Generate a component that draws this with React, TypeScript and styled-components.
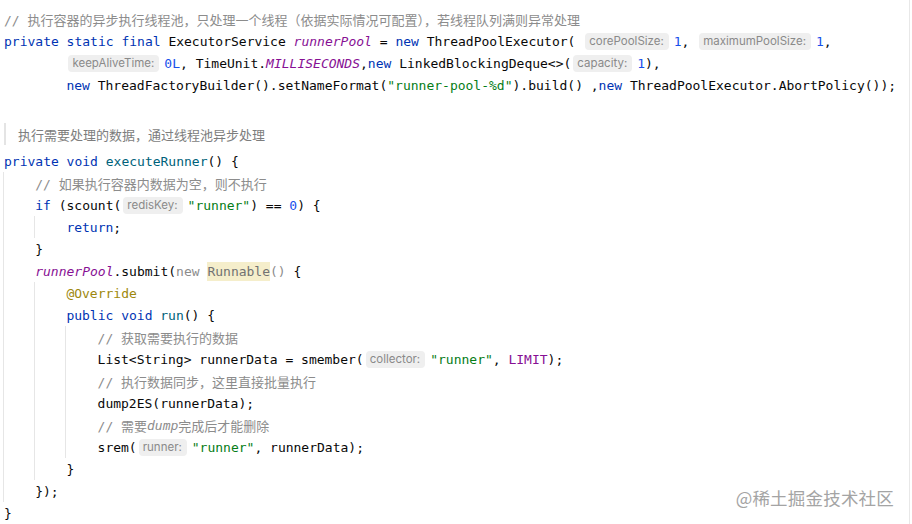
import React from "react";
import styled, { createGlobalStyle, css } from "styled-components";

const Global = createGlobalStyle`
  html, body { margin: 0; padding: 0; background: #ffffff; }
  #root { width: 912px; height: 524px; }
`;

const Editor = styled.div`
  position: relative;
  box-sizing: border-box;
  width: 910px;
  height: 524px;
  overflow: hidden;
  padding-top: 8px;
  border-right: 1px solid #e8e8e8;
  background: #ffffff;
  font-family: "DejaVu Sans Mono", "Noto Sans CJK SC", monospace;
  font-size: 13px;
  color: #080808;
`;

const Line = styled.div`
  display: flex;
  align-items: center;
  height: 22px;
  padding-left: 4px;
  white-space: pre;
`;

const Guide = styled.span<{ $show: boolean }>`
  box-sizing: border-box;
  align-self: stretch;
  flex: none;
  width: 32.2px;
  margin-left: -1px;
  border-left: 1px solid ${(p) => (p.$show ? "#e6e6e6" : "transparent")};
`;

type Kind = "plain" | "kw" | "field" | "num" | "str" | "cmt" | "cmtI" | "fn" | "ann" | "dim" | "runnable" | "const";

const kindStyles: Record<Kind, ReturnType<typeof css>> = {
  plain: css`color: #080808;`,
  kw: css`color: #0033b3;`,
  field: css`color: #871094; font-style: italic;`,
  num: css`color: #1750eb;`,
  str: css`color: #067d17;`,
  cmt: css`color: #8c8c8c;`,
  cmtI: css`color: #8c8c8c; font-style: italic;`,
  fn: css`color: #00627a;`,
  ann: css`color: #9e880d;`,
  dim: css`color: #8c8c8c;`,
  runnable: css`
    color: #727272;
    background: #f5eecb;
    padding: 2px 0;
  `,
  const: css`color: #871094;`,
};

const Token = styled.span<{ $kind: Kind }>`
  ${(p) => kindStyles[p.$kind]}
`;

const Hint = styled.span`
  display: inline-flex;
  align-items: center;
  height: 17px;
  padding: 0 5px 0 4px;
  margin: 0 5px 0 2px;
  border-radius: 4px;
  background: #efefef;
  color: #8a8a8a;
  font-family: Inter, "Noto Sans", sans-serif;
  font-size: 11.5px;
`;

const DocBlock = styled.div`
  display: flex;
  align-items: center;
  height: 32px;
  padding-left: 4px;
`;

const DocText = styled.div`
  display: flex;
  align-items: center;
  height: 22px;
  padding-left: 12px;
  border-left: 2px solid #e4e4e4;
  font-family: "Noto Sans CJK SC", "Noto Sans", sans-serif;
  font-size: 13px;
  color: #7d7d7d;
`;

const Watermark = styled.div`
  position: absolute;
  right: 15px;
  bottom: 14px;
  font-family: "Noto Sans CJK SC", sans-serif;
  font-size: 17.5px;
  color: #a4a4a4;
  letter-spacing: 0.2px;
`;

type Part = [Kind | "hint", string];
type CodeLine = { indent: number; guides: number; parts: Part[] } | { blank: true } | { doc: string };

const lines: CodeLine[] = [
  { indent: 0, guides: 0, parts: [["cmt", "// 执行容器的异步执行线程池，只处理一个线程（依据实际情况可配置），若线程队列满则异常处理"]] },
  {
    indent: 0,
    guides: 0,
    parts: [
      ["kw", "private static final "],
      ["plain", "ExecutorService "],
      ["field", "runnerPool"],
      ["plain", " = "],
      ["kw", "new "],
      ["plain", "ThreadPoolExecutor( "],
      ["hint", "corePoolSize:"],
      ["num", "1"],
      ["plain", ", "],
      ["hint", "maximumPoolSize:"],
      ["num", "1"],
      ["plain", ","],
    ],
  },
  {
    indent: 2,
    guides: 0,
    parts: [
      ["hint", "keepAliveTime:"],
      ["num", "0L"],
      ["plain", ", TimeUnit."],
      ["field", "MILLISECONDS"],
      ["plain", ","],
      ["kw", "new "],
      ["plain", "LinkedBlockingDeque<>("],
      ["hint", "capacity:"],
      ["num", "1"],
      ["plain", "),"],
    ],
  },
  {
    indent: 2,
    guides: 0,
    parts: [
      ["kw", "new "],
      ["plain", "ThreadFactoryBuilder().setNameFormat("],
      ["str", "\"runner-pool-%d\""],
      ["plain", ").build() ,"],
      ["kw", "new "],
      ["plain", "ThreadPoolExecutor.AbortPolicy());"],
    ],
  },
  { blank: true },
  { doc: "执行需要处理的数据，通过线程池异步处理" },
  { indent: 0, guides: 0, parts: [["kw", "private void "], ["fn", "executeRunner"], ["plain", "() {"]] },
  { indent: 1, guides: 1, parts: [["cmt", "// 如果执行容器内数据为空，则不执行"]] },
  {
    indent: 1,
    guides: 1,
    parts: [
      ["kw", "if "],
      ["plain", "(scount("],
      ["hint", "redisKey:"],
      ["str", "\"runner\""],
      ["plain", ") == "],
      ["num", "0"],
      ["plain", ") {"],
    ],
  },
  { indent: 2, guides: 2, parts: [["kw", "return"], ["plain", ";"]] },
  { indent: 1, guides: 1, parts: [["plain", "}"]] },
  {
    indent: 1,
    guides: 1,
    parts: [
      ["field", "runnerPool"],
      ["plain", ".submit("],
      ["dim", "new "],
      ["runnable", "Runnable"],
      ["dim", "()"],
      ["plain", " {"],
    ],
  },
  { indent: 2, guides: 2, parts: [["ann", "@Override"]] },
  { indent: 2, guides: 2, parts: [["kw", "public void "], ["fn", "run"], ["plain", "() {"]] },
  { indent: 3, guides: 3, parts: [["cmt", "// 获取需要执行的数据"]] },
  {
    indent: 3,
    guides: 3,
    parts: [
      ["plain", "List<String> runnerData = smember("],
      ["hint", "collector:"],
      ["str", "\"runner\""],
      ["plain", ", "],
      ["const", "LIMIT"],
      ["plain", ");"],
    ],
  },
  { indent: 3, guides: 3, parts: [["cmt", "// 执行数据同步，这里直接批量执行"]] },
  { indent: 3, guides: 3, parts: [["plain", "dump2ES(runnerData);"]] },
  { indent: 3, guides: 3, parts: [["cmt", "// 需要"], ["cmtI", "dump"], ["cmt", "完成后才能删除"]] },
  {
    indent: 3,
    guides: 3,
    parts: [["plain", "srem("], ["hint", "runner:"], ["str", "\"runner\""], ["plain", ", runnerData);"]],
  },
  { indent: 2, guides: 2, parts: [["plain", "}"]] },
  { indent: 1, guides: 1, parts: [["plain", "});"]] },
  { indent: 0, guides: 0, parts: [["plain", "}"]] },
];

export default function App() {
  return (
    <>
      <Global />
      <Editor>
        {lines.map((ln, i) => {
          if ("blank" in ln) return <Line key={i} />;
          if ("doc" in ln)
            return (
              <DocBlock key={i}>
                <DocText>{ln.doc}</DocText>
              </DocBlock>
            );
          return (
            <Line key={i}>
              {Array.from({ length: ln.indent }).map((_, g) => (
                <Guide key={"g" + g} $show={g < ln.guides} />
              ))}
              {ln.parts.map(([k, t], j) =>
                k === "hint" ? <Hint key={j}>{t}</Hint> : <Token key={j} $kind={k}>{t}</Token>
              )}
            </Line>
          );
        })}
        <Watermark>@稀土掘金技术社区</Watermark>
      </Editor>
    </>
  );
}
